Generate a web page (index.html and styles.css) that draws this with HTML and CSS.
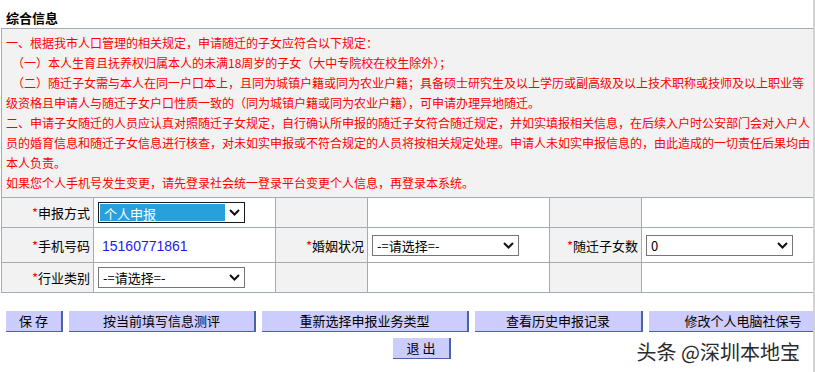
FILE: index.html
```html
<!DOCTYPE html>
<html>
  <head>
    <meta charset="utf-8">
    <title>综合信息</title>
    <link rel="stylesheet" href="styles.css">
  </head>
  <body>
    <div class="page">
      <h2 class="title">综合信息</h2>

      <table class="form">
        <colgroup>
          <col class="c-lbl"><col class="c-val"><col class="c-lbl"><col class="c-val"><col class="c-lbl"><col class="c-last">
        </colgroup>
        <tr>
          <td colspan="6" class="notice">
            <div>一、根据我市人口管理的相关规定，申请随迁的子女应符合以下规定：</div>
            <div class="indent">（一）本人生育且抚养权归属本人的未满18周岁的子女（大中专院校在校生除外）；</div>
            <div class="indent">（二）随迁子女需与本人在同一户口本上，且同为城镇户籍或同为农业户籍；具备硕士研究生及以上学历或副高级及以上技术职称或技师及以上职业等级资格且申请人与随迁子女户口性质一致的（同为城镇户籍或同为农业户籍），可申请办理异地随迁。</div>
            <div>二、申请子女随迁的人员应认真对照随迁子女规定，自行确认所申报的随迁子女符合随迁规定，并如实填报相关信息，在后续入户时公安部门会对入户人员的婚育信息和随迁子女信息进行核查，对未如实申报或不符合规定的人员将按相关规定处理。申请人未如实申报信息的，由此造成的一切责任后果均由本人负责。</div>
            <div>如果您个人手机号发生变更，请先登录社会统一登录平台变更个人信息，再登录本系统。</div>
          </td>
        </tr>
        <tr class="row-a">
          <td class="lbl"><span class="req">*</span>申报方式</td>
          <td class="val">
            <span class="sel focus">
              <select><option>个人申报</option><option>单位申报</option></select>
              <span class="arr"><svg width="11" height="7" viewBox="0 0 11 7"><polyline points="1,1 5.5,5.5 10,1" fill="none" stroke="#111" stroke-width="2"/></svg></span>
            </span>
          </td>
          <td class="lbl"></td>
          <td class="val"></td>
          <td class="lbl"></td>
          <td class="val"></td>
        </tr>
        <tr class="row-b">
          <td class="lbl"><span class="req">*</span>手机号码</td>
          <td class="val"><span class="phone">15160771861</span></td>
          <td class="lbl"><span class="req">*</span>婚姻状况</td>
          <td class="val">
            <span class="sel">
              <select><option>-=请选择=-</option></select>
              <span class="arr"><svg width="11" height="7" viewBox="0 0 11 7"><polyline points="1,1 5.5,5.5 10,1" fill="none" stroke="#111" stroke-width="2"/></svg></span>
            </span>
          </td>
          <td class="lbl"><span class="req">*</span>随迁子女数</td>
          <td class="val">
            <span class="sel">
              <select><option>0</option><option>1</option><option>2</option></select>
              <span class="arr"><svg width="11" height="7" viewBox="0 0 11 7"><polyline points="1,1 5.5,5.5 10,1" fill="none" stroke="#111" stroke-width="2"/></svg></span>
            </span>
          </td>
        </tr>
        <tr class="row-a">
          <td class="lbl"><span class="req">*</span>行业类别</td>
          <td class="val">
            <span class="sel">
              <select><option>-=请选择=-</option></select>
              <span class="arr"><svg width="11" height="7" viewBox="0 0 11 7"><polyline points="1,1 5.5,5.5 10,1" fill="none" stroke="#111" stroke-width="2"/></svg></span>
            </span>
          </td>
          <td class="lbl"></td>
          <td class="val"></td>
          <td class="lbl"></td>
          <td class="val"></td>
        </tr>
      </table>

      <div class="actions">
        <button class="btn btn-save">保 存</button>
        <button class="btn btn-eval">按当前填写信息测评</button>
        <button class="btn btn-reselect">重新选择申报业务类型</button>
        <button class="btn btn-history">查看历史申报记录</button>
        <button class="btn btn-modify">修改个人电脑社保号</button>
      </div>
      <div class="actions-exit">
        <button class="btn btn-exit">退 出</button>
      </div>

      <div class="watermark">头条 @深圳本地宝</div>
    </div>
  </body>
</html>
```

FILE: styles.css
```css
* {
  box-sizing: border-box;
}

body {
  margin: 0;
  padding: 0;
  font-family: "Noto Sans CJK SC", "Noto Sans", sans-serif;
  font-size: 13px;
  color: #000;
  background: #fff;
  overflow: hidden;
}

.page {
  position: relative;
  width: 815px;
  height: 372px;
  overflow: hidden;
  border-right: 2px solid #d2d2d2;
}

.title {
  margin: 0;
  padding: 8px 0 0 6px;
  font-size: 13px;
  line-height: 20px;
  font-weight: bold;
}

.form {
  margin-left: 1px;
  width: 812px;
  table-layout: fixed;
  border-collapse: collapse;
}

.form td {
  border: 1px solid #a3abbb;
  padding: 0;
}

.c-lbl {
  width: 92px;
}

.c-val {
  width: 182px;
}

.c-last {
  width: 173px;
}

.notice {
  background-color: #f2f2f2;
  color: #ff0000;
  font-size: 12px;
  line-height: 20px;
  padding: 4px 3px 4px 4px !important;
}

.notice .indent {
  text-indent: 6px;
}

.row-a td {
  height: 30px;
}

.row-b td {
  height: 35px;
}

.lbl {
  background-color: #f2f2f2;
  text-align: right;
  padding-right: 3px !important;
  white-space: nowrap;
}

.val {
  background-color: #fff;
  padding-left: 4px !important;
}

.req {
  color: #ff0000;
}

.phone {
  padding-left: 4px;
  font-family: "Liberation Sans", Arial, sans-serif;
  font-size: 14px;
  color: #1c1ce8;
}

.sel {
  display: inline-flex;
  align-items: center;
  width: 147px;
  height: 21px;
  border: 1px solid #767676;
  background: #fff;
  vertical-align: middle;
}

.sel select {
  -webkit-appearance: none;
  appearance: none;
  flex: 1;
  min-width: 0;
  height: 100%;
  margin: 0;
  padding: 0 0 0 4px;
  border: 0;
  outline: none;
  background: transparent;
  font-family: "Noto Sans CJK SC", "Noto Sans", sans-serif;
  font-size: 13px;
  color: #000;
}

.sel .arr {
  display: flex;
  align-items: center;
  justify-content: center;
  width: 19px;
  height: 100%;
}

.sel.focus {
  border-color: #1a1a1a;
}

.sel.focus select {
  margin: 1px 0 1px 1px;
  height: calc(100% - 2px);
  background: #27a0dc;
  color: #fff;
}

.actions {
  display: flex;
  gap: 6px;
  margin: 18px 0 0 6px;
  width: 900px;
}

.actions-exit {
  margin: 6px 0 0 393px;
}

.btn {
  flex: none;
  height: 21px;
  padding: 0;
  margin: 0;
  border: 0;
  border-right: 2px solid #4a62a6;
  border-bottom: 1px solid #4a62a6;
  background-color: #ccccff;
  font-family: "Noto Sans CJK SC", "Noto Sans", sans-serif;
  font-size: 13px;
  line-height: 20px;
  color: #000;
}

.btn-save {
  width: 57px;
}

.btn-eval {
  width: 187px;
}

.btn-reselect {
  width: 207px;
}

.btn-history {
  width: 168px;
}

.btn-modify {
  width: 190px;
}

.btn-exit {
  width: 58px;
}

.watermark {
  position: absolute;
  right: 13px;
  top: 338px;
  font-size: 20px;
  line-height: 28px;
  color: #2b2b2b;
  text-shadow: 0 0 2px #fff, 0 0 1px #fff;
  white-space: nowrap;
}
```
